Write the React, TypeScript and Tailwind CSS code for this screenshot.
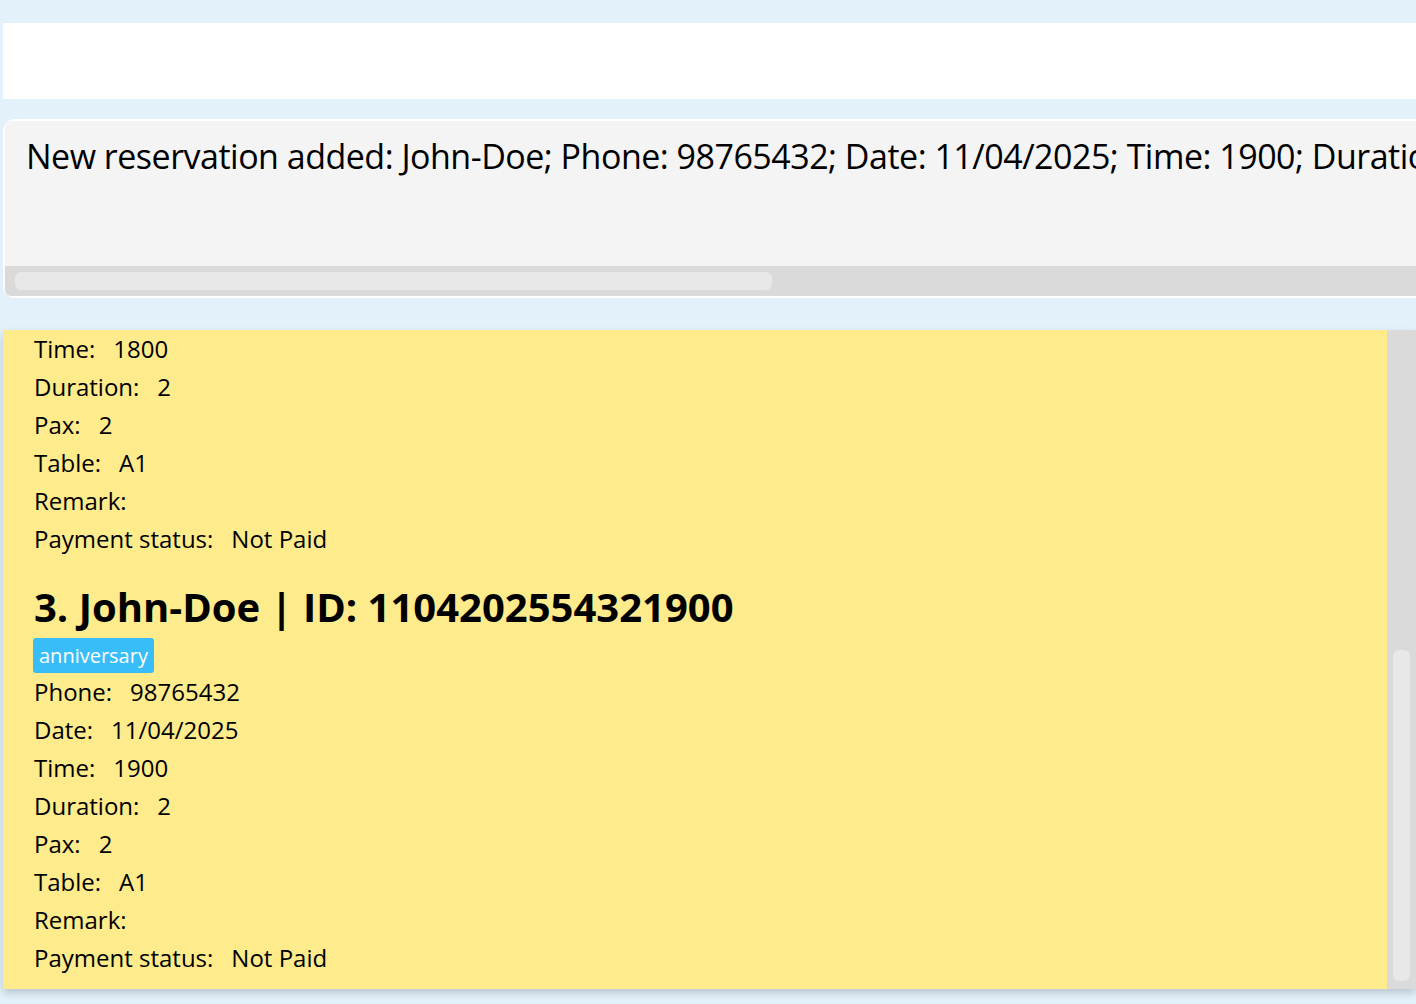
const FONT = "font-['Open_Sans',_'Noto_Sans',_sans-serif]";

type Row = { label: string; value: string };

const firstRows: Row[] = [
  { label: "Time:", value: "1800" },
  { label: "Duration:", value: "2" },
  { label: "Pax:", value: "2" },
  { label: "Table:", value: "A1" },
  { label: "Remark:", value: "" },
  { label: "Payment status:", value: "Not Paid" },
];

const secondRows: Row[] = [
  { label: "Phone:", value: "98765432" },
  { label: "Date:", value: "11/04/2025" },
  { label: "Time:", value: "1900" },
  { label: "Duration:", value: "2" },
  { label: "Pax:", value: "2" },
  { label: "Table:", value: "A1" },
  { label: "Remark:", value: "" },
  { label: "Payment status:", value: "Not Paid" },
];

function Field({ row }: { row: Row }) {
  return (
    <div className="flex h-[38px] items-center gap-[18px] text-[24px] text-black">
      <span>{row.label}</span>
      {row.value && <span>{row.value}</span>}
    </div>
  );
}

export default function App() {
  return (
    <div className={`${FONT} h-[1004px] w-full overflow-hidden bg-[#e3f1fb]`}>
      <div className="pt-[23px]">
        <div className="ml-[3px] h-[76px] bg-white" />
      </div>

      {/* result display */}
      <div className="ml-[3px] mt-[20px] h-[179px] rounded-l-[12px] bg-white p-[2px] pr-0">
        <div className="flex h-full flex-col overflow-hidden rounded-l-[6px] bg-[#f4f4f4]">
          <div className="flex-1 overflow-hidden whitespace-nowrap pl-[21px] pt-[11px] text-[34px] leading-[48px] tracking-[-0.5px] text-black">
            New reservation added: John-Doe; Phone: 98765432; Date: 11/04/2025; Time: 1900; Duration: 2; Pax: 2; Table: A1
          </div>
          <div className="h-[30px] bg-[#dadada] px-[10px] py-[6px]">
            <div className="h-full w-[757px] rounded-[6px] bg-[#e8e8e8]" />
          </div>
        </div>
      </div>

      {/* reservation list */}
      <div className="ml-[3px] mt-[32px] flex h-[659px] shadow-[0_4px_8px_rgba(0,0,0,0.18)]">
        <div className="flex-1 overflow-hidden bg-[#fdeb8c] pl-[31px]">
          {firstRows.map((r, i) => (
            <Field key={"a" + i} row={r} />
          ))}
          <div className="pt-[20px] text-[40px] font-bold leading-[58px] text-black">
            3. John-Doe | ID: 1104202554321900
          </div>
          <div className="-ml-[1px] mt-[2px] inline-flex h-[35px] items-center rounded-[3px] bg-[#38bdf8] px-[6px] text-[20px] text-white">
            anniversary
          </div>
          {secondRows.map((r, i) => (
            <Field key={"b" + i} row={r} />
          ))}
        </div>
        <div className="flex w-[29px] flex-col bg-[#dadada] px-[6px] pb-[8px]">
          <div className="mt-auto h-[331px] rounded-[6px] bg-[#e8e8e8]" />
        </div>
      </div>
    </div>
  );
}
